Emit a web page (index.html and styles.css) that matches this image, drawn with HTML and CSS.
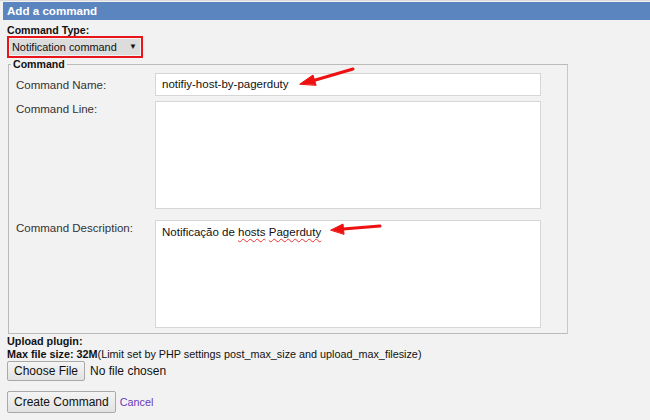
FILE: index.html
```html
<!DOCTYPE html>
<html>
<head>
<meta charset="utf-8">
<link rel="stylesheet" href="styles.css">
</head>
<body>
<div class="page">
  <div class="header">Add a command</div>
  <form class="form">
    <div class="type-label">Command Type:</div>
    <div class="type-select-wrap">
      <div class="type-select"><span>Notification command</span><span class="caret">▼</span></div>
    </div>
    <fieldset class="cmd">
      <legend>Command</legend>
      <div class="grid">
        <label class="lbl lbl-name">Command Name:</label>
        <div class="field input">notifiy-host-by-pagerduty</div>
        <label class="lbl">Command Line:</label>
        <div class="field area"></div>
        <label class="lbl row-desc">Command Description:</label>
        <div class="field area row-desc">Notificação de <span class="spell">hosts</span> <span class="spell">Pagerduty</span></div>
      </div>
    </fieldset>
    <div class="upload">
      <div class="bold">Upload plugin:</div>
      <div><span class="bold">Max file size: 32M</span>(Limit set by PHP settings post_max_size and upload_max_filesize)</div>
      <div class="file-row"><span class="btn">Choose File</span><span class="nofile">No file chosen</span></div>
    </div>
    <div class="actions"><span class="btn btn-big">Create Command</span><a class="cancel">Cancel</a></div>
  </form>
  <svg class="arrows" width="650" height="420" viewBox="0 0 650 420">
    <g stroke="#ee1111" stroke-width="3" stroke-linecap="round" fill="#ee1111">
      <line x1="353" y1="68" x2="312" y2="80"/>
      <polygon points="300,83 313,74 316,84" stroke-width="1"/>
      <line x1="380" y1="225" x2="343" y2="228"/>
      <polygon points="331,229 343,223 344,233" stroke-width="1"/>
    </g>
  </svg>
</div>
</body>
</html>
```
FILE: styles.css
```css
html, body {
  margin: 0;
  padding: 0;
  background: #f2f2f2;
  font-family: "Liberation Sans", Arial, sans-serif;
  font-size: 11.5px;
  color: #222;
}
.page {
  position: relative;
  width: 650px;
  height: 420px;
  overflow: hidden;
  border-top: 1px solid #dcdcdc;
}
.header {
  margin: 1px 0 0 3px;
  height: 18px;
  line-height: 18px;
  background: #5b85bf;
  color: #fff;
  font-weight: bold;
  padding-left: 4px;
  font-size: 11.6px;
}
.form {
  padding-left: 7px;
}
.type-label {
  font-weight: bold;
  font-size: 10.6px;
  margin-top: 4px;
  line-height: 12px;
  color: #111;
}
.type-select-wrap {
  display: inline-block;
  border: 2px solid #e8161a;
  padding: 1px;
}
.type-select {
  width: 128px;
  height: 16px;
  line-height: 16px;
  background: #dcdcdc;
  font-size: 10.9px;
  padding-left: 2px;
  color: #111;
  display: flex;
  justify-content: space-between;
  white-space: nowrap;
}
.caret {
  font-size: 8px;
  padding-right: 3px;
}
.cmd {
  margin: 0 0 0 1px;
  width: 551px;
  border: 1px solid #bbb;
  border-right-color: #c8c8c8;
  padding: 0 0 4px 7px;
  height: 270px;
  box-sizing: content-box;
}
.cmd legend {
  font-weight: bold;
  font-size: 10.6px;
  padding: 0 2px;
  margin-left: -5px;
  color: #111;
  white-space: nowrap;
}
.grid {
  display: grid;
  grid-template-columns: 139px 386px;
  row-gap: 5px;
  margin-top: 3px;
}
.lbl {
  padding-top: 2px;
  color: #333;
}
.lbl-name {
  align-self: center;
  padding-top: 0;
}
.row-desc {
  margin-top: 6px;
}
.field {
  background: #fff;
  border: 1px solid #d6d6d6;
  box-sizing: border-box;
  color: #111;
  padding: 3px 6px;
}
.input {
  height: 23px;
  line-height: 15px;
}
.area {
  height: 108px;
  padding-top: 5px;
}
.spell {
  text-decoration: underline wavy #e33;
  text-decoration-thickness: 1px;
  text-underline-offset: 2px;
}
.upload {
  margin-top: 1px;
  font-size: 10.8px;
  line-height: 13px;
  color: #111;
}
.bold {
  font-weight: bold;
}
.file-row {
  display: flex;
  align-items: center;
  margin-top: 0;
}
.btn {
  display: inline-block;
  border: 1px solid #a9a9a9;
  border-radius: 2px;
  background: linear-gradient(#f4f4f4, #e2e2e2);
  padding: 2px 6px;
  font-size: 12px;
  line-height: 14px;
  color: #111;
}
.btn-big {
  padding: 3px 6px;
}
.nofile {
  font-size: 12px;
  margin-left: 5px;
}
.actions {
  margin-top: 10px;
  display: flex;
  align-items: center;
}
.cancel {
  color: #6a3ab6;
  font-size: 10.8px;
  margin-left: 4px;
}
.arrows {
  position: absolute;
  left: 0;
  top: 0;
  pointer-events: none;
}
```
